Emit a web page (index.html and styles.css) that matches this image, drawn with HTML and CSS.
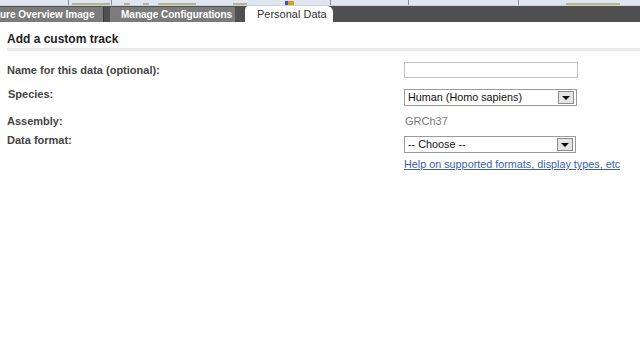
FILE: index.html
```html
<!DOCTYPE html>
<html>
<head>
<meta charset="utf-8">
<link rel="stylesheet" href="styles.css">
</head>
<body>
<div class="strip">
  <span class="mark olive" style="left:72px;width:38px"></span>
  <span class="mark line" style="left:68px"></span>
  <span class="mark olive" style="left:124px;width:6px"></span>
  <span class="mark olive" style="left:143px;width:6px"></span>
  <span class="mark olive" style="left:158px;width:38px"></span>
  <span class="mark olive" style="left:233px;width:14px"></span>
  <span class="mark dot" style="left:285px"></span>
  <span class="mark line" style="left:111px"></span>
  <span class="mark line" style="left:330px"></span>
  <span class="mark line" style="left:408px"></span>
  <span class="mark line" style="left:518px"></span>
  <span class="mark olive" style="left:566px;width:54px"></span>
</div>
<div class="tabbar">
  <div class="tab">ure Overview Image</div>
  <div class="tab tab2">Manage Configurations</div>
  <div class="tab active">Personal Data</div>
</div>
<div class="content">
  <h2 class="section">Add a custom track</h2>
  <div class="row r1">
    <div class="label">Name for this data (optional):</div>
    <div class="field"><div class="textbox"></div></div>
  </div>
  <div class="row r2">
    <div class="label">Species:</div>
    <div class="field"><div class="select s1"><span class="val">Human (Homo sapiens)</span><span class="btn"><span class="tri"></span></span></div></div>
  </div>
  <div class="row r3">
    <div class="label">Assembly:</div>
    <div class="field plain">GRCh37</div>
  </div>
  <div class="row r4">
    <div class="label">Data format:</div>
    <div class="field"><div class="select s2"><span class="val">-- Choose --</span><span class="btn"><span class="tri"></span></span></div></div>
  </div>
  <div class="row r5">
    <div class="label"></div>
    <div class="field"><a class="help" href="#">Help on supported formats, display types, etc</a></div>
  </div>
</div>
</body>
</html>
```
FILE: styles.css
```css
html, body {
  margin: 0;
  padding: 0;
  background: #ffffff;
  font-family: "Liberation Sans", Arial, sans-serif;
  width: 640px;
  height: 360px;
  overflow: hidden;
}
.strip {
  position: relative;
  height: 6px;
  background: #dfe6ef;
  border-bottom: 1px solid #c9d2de;
  box-sizing: border-box;
}
.mark {
  position: absolute;
  bottom: 0;
  height: 2px;
}
.mark.olive { background: #b9b48a; }
.mark.line { width: 1px; height: 6px; background: #8a8f99; }
.mark.dot { width: 6px; height: 4px; background: #d8a020; border-left: 3px solid #4050c0; }
.tabbar {
  display: flex;
  align-items: flex-end;
  height: 16px;
  background: #505050;
}
.tab {
  height: 15px;
  line-height: 15px;
  background: #7b7b7b;
  color: #ffffff;
  font-weight: bold;
  font-size: 10px;
  padding: 0 10px 0 0;
  width: 93px;
  white-space: nowrap;
  border-right: 1px solid #3a3a3a;
}
.tab2 {
  margin-left: 6px;
  width: 114px;
  padding: 0 0 0 11px;
  border-right: none;
}
.tab.active {
  margin-left: 10px;
  width: 76px;
  padding: 0 0 0 12px;
  height: 16px;
  line-height: 16px;
  background: #ffffff;
  color: #333333;
  font-weight: normal;
  font-size: 11px;
  border: none;
  border-radius: 4px 6px 0 0;
}
.content {
  padding: 0 0 0 7px;
}
.section {
  margin: 10px 0 0 0;
  font-size: 12px;
  line-height: 14px;
  font-weight: bold;
  color: #222222;
  padding-bottom: 2px;
  border-bottom: 3px solid #ebebeb;
}
.row {
  display: flex;
  align-items: flex-start;
}
.label {
  width: 397px;
  flex: none;
  font-size: 11px;
  font-weight: bold;
  color: #444444;
  line-height: 14px;
}
.field {
  font-size: 11px;
  color: #222222;
}
.r1 { margin-top: 11px; }
.r1 .label { line-height: 16px; }
.textbox {
  width: 172px;
  height: 14px;
  border: 1px solid #c4c4c4;
  background: #fff;
}
.r2 { margin-top: 9px; }
.r2 .label { padding-left: 1px; width: 396px; }
.r2 .field { margin-top: 2px; }
.select {
  display: flex;
  align-items: center;
  height: 15px;
  border: 1px solid #9a9a9a;
  background: #fff;
  box-sizing: content-box;
}
.s1 { width: 171px; }
.s2 { width: 170px; }
.val {
  flex: 1;
  padding-left: 3px;
  font-size: 10.8px;
  line-height: 15px;
  color: #111;
  white-space: nowrap;
}
.btn {
  width: 14px;
  height: 11px;
  margin-right: 2px;
  background: #e4e4e4;
  border: 1px solid #8c8c8c;
  display: flex;
  align-items: center;
  justify-content: center;
}
.tri {
  width: 0;
  height: 0;
  border-left: 4px solid transparent;
  border-right: 4px solid transparent;
  border-top: 4px solid #000;
}
.r3 { margin-top: 8px; }
.plain {
  color: #7a7a7a;
  line-height: 14px;
  margin-left: 1px;
}
.r4 { margin-top: 5px; }
.r4 .field { margin-top: 3px; }
.r5 { margin-top: 4px; }
.help {
  font-size: 10.8px;
  line-height: 14px;
  color: #3a5fae;
  text-decoration: underline;
}
```
